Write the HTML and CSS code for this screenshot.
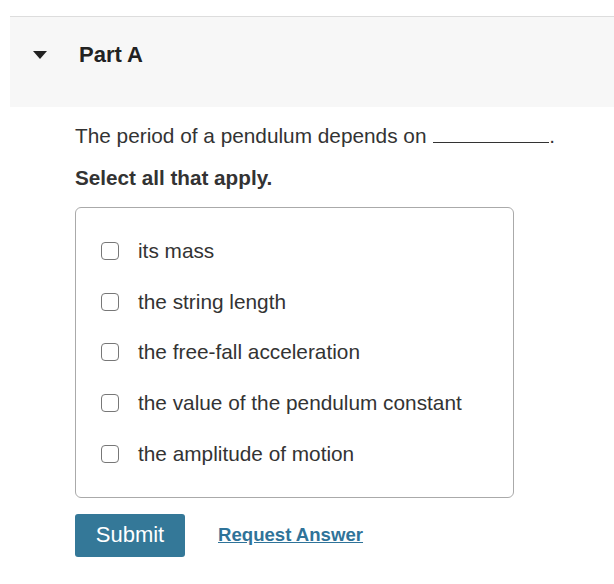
FILE: index.html
```html
<!DOCTYPE html>
<html lang="en">
<head>
    <meta charset="UTF-8">
    <title>Part A</title>
    <link rel="stylesheet" href="styles.css">
</head>
<body>
    <div class="part-header">
        <span class="caret"></span>
        <h2>Part A</h2>
    </div>
    <div class="part-body">
        <p class="question">The period of a pendulum depends on <span class="blank"></span>.</p>
        <p class="instruction">Select all that apply.</p>
        <div class="choices">
            <label class="choice"><span class="box"></span>its mass</label>
            <label class="choice"><span class="box"></span>the string length</label>
            <label class="choice"><span class="box"></span>the free-fall acceleration</label>
            <label class="choice"><span class="box"></span>the value of the pendulum constant</label>
            <label class="choice"><span class="box"></span>the amplitude of motion</label>
        </div>
        <div class="actions">
            <button class="submit">Submit</button>
            <a href="#" class="request">Request Answer</a>
        </div>
    </div>
</body>
</html>
```

FILE: styles.css
```css
body {
    margin: 0;
    padding-top: 16px;
    font-family: "Liberation Sans", Arial, sans-serif;
    color: #333;
    background: #fff;
}
.part-header {
    margin-left: 10px;
    height: 76px;
    padding-bottom: 14px;
    border-top: 1px solid #ddd;
    background-color: #f7f7f7;
    display: flex;
    align-items: center;
}
.caret {
    width: 0;
    height: 0;
    margin-left: 23px;
    border-left: 7px solid transparent;
    border-right: 7px solid transparent;
    border-top: 8px solid #222;
}
.part-header h2 {
    margin: 0 0 0 32px;
    font-size: 22px;
    color: #222;
}
.part-body {
    padding-left: 75px;
}
.question {
    margin: 16px 0 0;
    font-size: 20.8px;
    line-height: 26px;
}
.blank {
    display: inline-block;
    width: 116px;
    border-bottom: 1px solid #333;
    margin-left: 1px;
}
.instruction {
    margin: 16px 0 0;
    font-size: 20.7px;
    line-height: 26px;
    font-weight: bold;
}
.choices {
    margin-top: 16px;
    border: 1px solid #aaa;
    border-radius: 6px;
    padding: 18px 0 18px 25px;
    width: 412px;
}
.choice {
    display: flex;
    align-items: center;
    height: 50.6px;
    font-size: 20.8px;
}
.box {
    width: 16px;
    height: 16px;
    border: 1.5px solid #777;
    border-radius: 4px;
    margin-right: 19px;
    background: #fff;
}
.actions {
    margin-top: 16px;
    display: flex;
    align-items: center;
}
.submit {
    width: 110px;
    height: 43px;
    border: none;
    border-radius: 3px;
    background-color: #347898;
    color: #fff;
    font-family: "Liberation Sans", Arial, sans-serif;
    font-size: 22px;
    cursor: pointer;
}
.request {
    margin-left: 33px;
    color: #2f7399;
    font-size: 18.6px;
    font-weight: bold;
}
```
